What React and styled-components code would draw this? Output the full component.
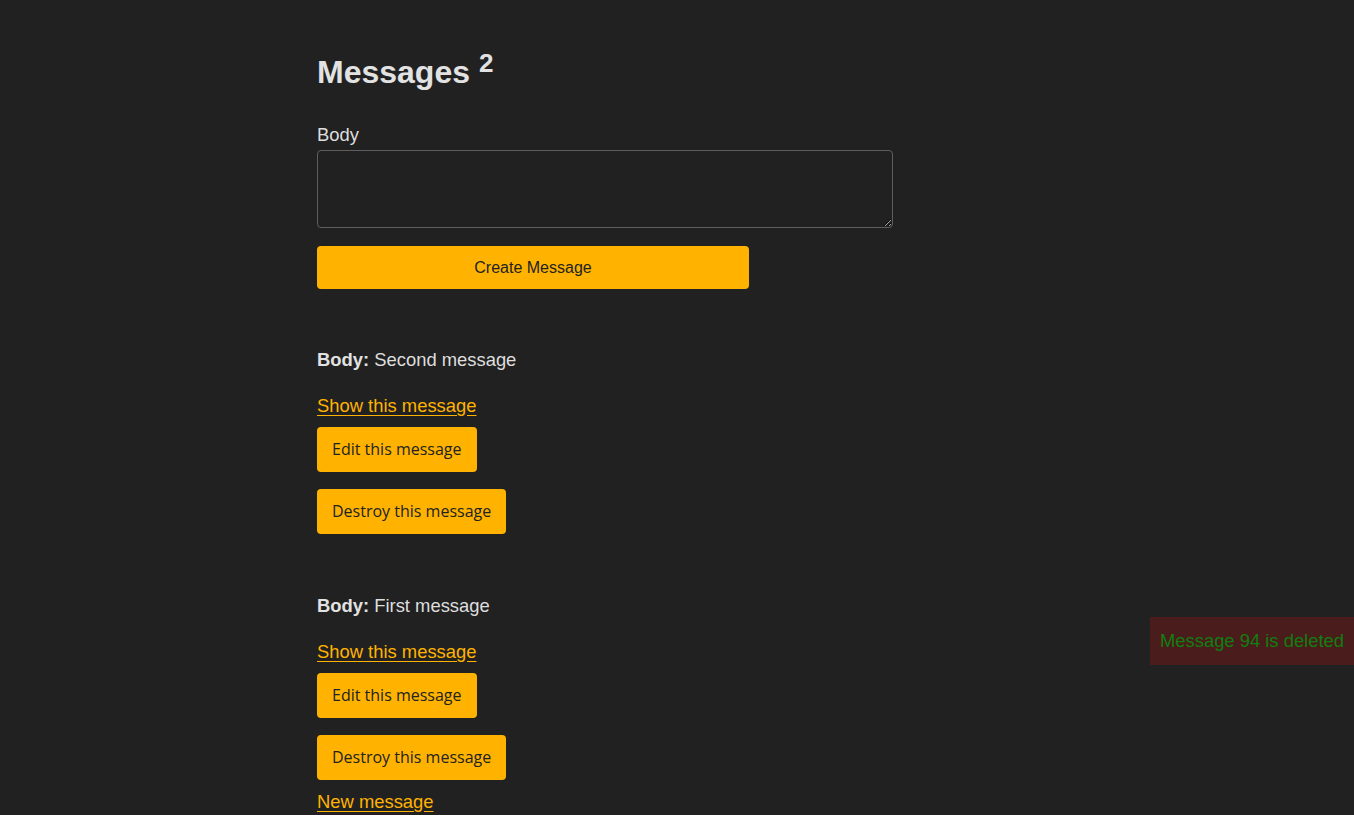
import React from 'react'
import styled, { createGlobalStyle } from 'styled-components'

const GlobalStyle = createGlobalStyle`
  html, body {
    margin: 0;
    padding: 0;
    background: #212121;
    color: #dedede;
    font-family: "Liberation Sans", Arial, sans-serif;
  }
`

const Main = styled.main`
  max-width: 720px;
  margin: 0 auto;
  padding-top: 53px;
`

const Title = styled.h1`
  margin: 0;
  font-size: 32px;
  line-height: 38px;
  font-weight: 700;
  color: #e2e2e2;

  sup {
    font-size: 26px;
    line-height: 0;
    vertical-align: 11px;
  }
`

const Form = styled.form`
  margin-top: 30px;
  display: flex;
  flex-direction: column;
  align-items: flex-start;
`

const Label = styled.label`
  display: block;
  font-size: 18.4px;
  line-height: 27px;
  margin-bottom: 2px;
`

const TextArea = styled.textarea`
  box-sizing: border-box;
  width: 576px;
  height: 78px;
  background: #212121;
  border: 1px solid #5e5e5e;
  border-radius: 4px;
  color: #dedede;
  font: 16px "Liberation Sans", Arial, sans-serif;
`

const Submit = styled.button`
  margin-top: 18px;
  width: 432px;
  height: 43px;
  border: none;
  border-radius: 4px;
  background: #ffb300;
  color: #222;
  font: 16px "Liberation Sans", Arial, sans-serif;
  cursor: pointer;
`

const List = styled.div`
  margin-top: 57px;
  display: flex;
  flex-direction: column;
  gap: 58px;
`

const Message = styled.div`
  display: flex;
  flex-direction: column;
  align-items: flex-start;
`

const Field = styled.p`
  margin: 0 0 19px;
  font-size: 18.4px;
  line-height: 27px;

  strong {
    color: #e2e2e2;
  }
`

const Link = styled.a`
  font-size: 18.4px;
  line-height: 27px;
  color: #ffb300;
  text-decoration: underline;
  text-underline-offset: 3px;
`

const ActionButton = styled.button`
  margin-top: ${p => p.$gap}px;
  padding: 10px 15px;
  border: none;
  border-radius: 4px;
  background: #ffb300;
  color: #222;
  font: 16px/25px "Open Sans", "Noto Sans", sans-serif;
  cursor: pointer;
`

const Footer = styled.div`
  margin-top: 8px;
`

const Toast = styled.div`
  position: fixed;
  top: 617px;
  right: 0;
  height: 48px;
  display: flex;
  align-items: center;
  padding: 0 10px;
  background: #4a1c1c;
  color: #107e10;
  font-size: 18.4px;
`

const messages = [
  { id: 2, body: 'Second message' },
  { id: 1, body: 'First message' },
]

export default function App() {
  return (
    <>
      <GlobalStyle />
      <Main>
        <Title>Messages <sup>{messages.length}</sup></Title>
        <Form onSubmit={e => e.preventDefault()}>
          <Label htmlFor="body">Body</Label>
          <TextArea id="body" />
          <Submit type="submit">Create Message</Submit>
        </Form>
        <List>
          {messages.map(m => (
            <Message key={m.id}>
              <Field><strong>Body:</strong> {m.body}</Field>
              <Link href="#">Show this message</Link>
              <ActionButton $gap={8}>Edit this message</ActionButton>
              <ActionButton $gap={17}>Destroy this message</ActionButton>
            </Message>
          ))}
        </List>
        <Footer>
          <Link href="#">New message</Link>
        </Footer>
      </Main>
      <Toast>Message 94 is deleted</Toast>
    </>
  )
}
